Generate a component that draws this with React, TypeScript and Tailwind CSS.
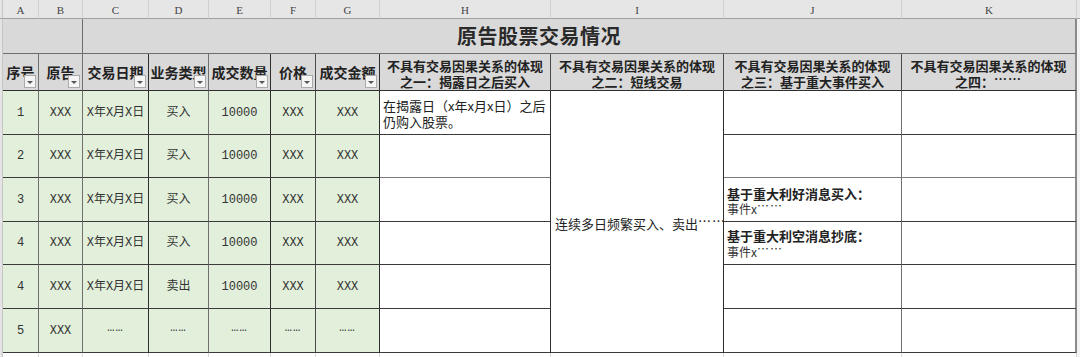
import React from "react";

const letters = ["A", "B", "C", "D", "E", "F", "G", "H", "I", "J", "K"];

const headers = ["序号", "原告", "交易日期", "业务类型", "成交数量", "价格", "成交金额"];

const rows = [
  ["1", "XXX", "X年X月X日", "买入", "10000", "XXX", "XXX"],
  ["2", "XXX", "X年X月X日", "买入", "10000", "XXX", "XXX"],
  ["3", "XXX", "X年X月X日", "买入", "10000", "XXX", "XXX"],
  ["4", "XXX", "X年X月X日", "买入", "10000", "XXX", "XXX"],
  ["4", "XXX", "X年X月X日", "卖出", "10000", "XXX", "XXX"],
  ["5", "XXX", "……", "……", "……", "……", "……"],
];

// right border of each A-G column, the sheet mixes dark and grey lines
const vLine = [
  "border-r-[#707070]",
  "border-r-[#707070]",
  "border-r-[#2e2e2e]",
  "border-r-[#707070]",
  "border-r-[#2e2e2e]",
  "border-r-[#4a4a4a]",
  "border-r-[#2e2e2e]",
];

const Strip = () => (
  <div className="bg-[#e4e4e4] border-r border-r-[#c6c6c6]" />
);

const RightStrip = () => <div className="bg-[#f3f3f3]" />;

// chinese style ellipsis sits at mid height, not on the baseline
const Dots = () => (
  <span className="inline-block -translate-y-[0.22em] tracking-[1px]">……</span>
);

const FilterButton = () => (
  <span className="absolute right-[2px] bottom-[2px] w-[12px] h-[13px] bg-[#f5f5f5] border border-[#ababab] flex items-end justify-center pb-[3px]">
    <span className="w-0 h-0 border-l-[3px] border-r-[3px] border-t-[3px] border-l-transparent border-r-transparent border-t-[#555]" />
  </span>
);

const cjk = "font-['Noto_Sans_CJK_SC',sans-serif]";

const App = () => {
  return (
    <main lang="zh-CN" className="w-[1080px] h-[357px] overflow-hidden bg-white text-[#222]">
      <div className="grid grid-cols-[3px_36px_44px_66px_60px_62px_45px_64px_171px_173px_178px_175px_3px] grid-rows-[19px_35px_37px_44px_43px_44px_43px_44px_44px_4px]">
        {/* column letters */}
        <div className="bg-[#e4e4e4] border-r border-b border-r-[#c6c6c6] border-b-[#a0a0a0]" />
        {letters.map((l) => (
          <div
            key={l}
            className="bg-[#e6e6e6] border-r border-b border-r-[#d0d0d0] border-b-[#a0a0a0] flex items-center justify-center pt-[3px] text-[11px] text-[#444] font-['Liberation_Serif',serif]"
          >
            {l}
          </div>
        ))}
        <div className="bg-[#e6e6e6] border-b border-b-[#a0a0a0]" />

        {/* title row */}
        <Strip />
        <div className="col-span-2 bg-[#d9d9d9] border-r border-b border-r-[#6e6e6e] border-b-[#6e6e6e]" />
        <div
          className={`col-span-9 bg-[#d9d9d9] border-r-2 border-b border-r-[#8a8a8a] border-b-[#6e6e6e] flex items-center justify-center pr-[80px] text-[20px] font-bold text-[#2a2a2a] tracking-[0.5px] ${cjk}`}
        >
          原告股票交易情况
        </div>
        <RightStrip />

        {/* header row */}
        <Strip />
        {headers.map((h, i) => (
          <div
            key={h}
            className={`relative bg-[#d9d9d9] border-r border-b border-b-[#2e2e2e] ${vLine[i]} flex items-center justify-center whitespace-nowrap overflow-hidden text-[14px] font-bold ${cjk}`}
          >
            {h}
            <FilterButton />
          </div>
        ))}
        {["之一：揭露日之后买入", "之二：短线交易", "之三：基于重大事件买入", "之四："].map(
          (s, i) => (
            <div
              key={s}
              className={`bg-[#d9d9d9] border-b border-b-[#2e2e2e] ${
                i === 3 ? "border-r-2 border-r-[#8a8a8a]" : "border-r border-r-[#4a4a4a]"
              } flex flex-col items-center justify-center pt-[3px] text-[13px] leading-[16px] font-bold ${cjk}`}
            >
              <span>不具有交易因果关系的体现</span>
              <span>
                {s}
                {i === 3 && <Dots />}
              </span>
            </div>
          )
        )}
        <RightStrip />

        {/* data rows */}
        {rows.map((r, ri) => (
          <React.Fragment key={ri}>
            <Strip />
            {r.map((c, ci) => (
              <div
                key={ci}
                className={`bg-[#e2efda] border-r border-b border-b-[#3a3a3a] ${vLine[ci]} flex items-center justify-center text-[12px] text-[#333] whitespace-nowrap font-['Liberation_Mono','Noto_Sans_CJK_SC',monospace]`}
              >
                {c === "……" ? <Dots /> : c}
              </div>
            ))}
            <div
              className={`border-r border-b border-r-[#2e2e2e] ${
                ri === 1 ? "border-b-[#7a7a7a]" : "border-b-[#3a3a3a]"
              } pt-[7px] pl-[3px] text-[13px] leading-[16px] text-[#222] ${cjk}`}
            >
              {ri === 0 && (
                <>
                  在揭露日（x年x月x日）之后
                  <br />
                  仍购入股票。
                </>
              )}
            </div>
            {ri === 0 && (
              <div
                className={`row-span-6 border-r border-b border-r-[#2e2e2e] border-b-[#3a3a3a] flex items-center pl-[4px] pt-[4px] text-[13px] text-[#222] whitespace-nowrap ${cjk}`}
              >
                连续多日频繁买入、卖出
                <Dots />
              </div>
            )}
            <div
              className={`border-r border-b border-r-[#707070] ${
                ri === 1 ? "border-b-[#7a7a7a]" : "border-b-[#3a3a3a]"
              } flex flex-col justify-center pl-[3px] pt-[2px] ${cjk}`}
            >
              {ri === 2 && (
                <>
                  <span className="text-[13px] leading-[15px] font-bold">基于重大利好消息买入：</span>
                  <span className="text-[12px] leading-[15px] text-[#333]">
                    事件x<Dots />
                  </span>
                </>
              )}
              {ri === 3 && (
                <>
                  <span className="text-[13px] leading-[16px] font-bold">基于重大利空消息抄底：</span>
                  <span className="text-[12px] leading-[16px] text-[#333]">
                    事件x<Dots />
                  </span>
                </>
              )}
            </div>
            <div
              className={`border-r-2 border-b border-r-[#8a8a8a] ${
                ri === 1 ? "border-b-[#7a7a7a]" : "border-b-[#3a3a3a]"
              }`}
            />
            <RightStrip />
          </React.Fragment>
        ))}

        {/* next sheet row peeking in */}
        <Strip />
        {letters.map((l) => (
          <div key={l} className="bg-white border-r border-r-[#d8d8d8]" />
        ))}
        <RightStrip />
      </div>
    </main>
  );
};

export default App;
